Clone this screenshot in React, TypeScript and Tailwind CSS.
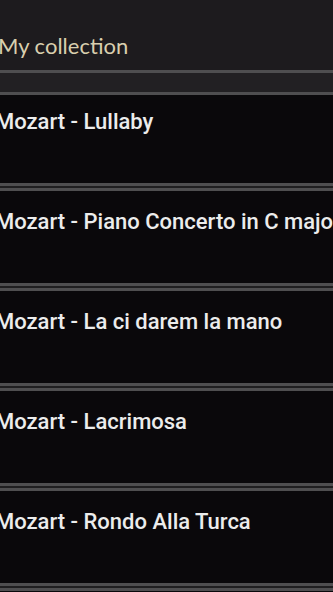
const songs = [
  "Mozart - Lullaby",
  "Mozart - Piano Concerto in C major",
  "Mozart - La ci darem la mano",
  "Mozart - Lacrimosa",
  "Mozart - Rondo Alla Turca",
];

const Divider = () => (
  <div className="flex flex-col">
    <div className="h-[3px] bg-[#4f4e50]" />
    <div className="h-[2px] bg-[#1f1e20]" />
    <div className="h-[3px] bg-[#4f4e50]" />
  </div>
);

export default function App() {
  return (
    <div className="w-[333px] h-[592px] overflow-hidden bg-[#0a080b]">
      <header className="h-[70px] bg-[#1d1b1e] flex items-end pb-[13px] -ml-[2px]">
        <h1 className="text-[22px] leading-none text-[#d9cfae] font-['Lato',sans-serif]">
          My collection
        </h1>
      </header>
      <div className="h-[3px] bg-[#4f4e50]" />
      <div className="h-[19px] bg-[#222023]" />
      <div className="h-[3px] bg-[#4f4e50]" />
      <ul>
        {songs.map((s, i) => (
          <li key={s}>
            <div
              className={
                (i === 0 ? "h-[88px] pt-[15px]" : "h-[92px] pt-[19px]") +
                " -ml-[5px] whitespace-nowrap text-[22px] leading-[24px] font-medium text-[#ececec] font-['Roboto',sans-serif]"
              }
            >
              {s}
            </div>
            <Divider />
          </li>
        ))}
      </ul>
    </div>
  );
}
